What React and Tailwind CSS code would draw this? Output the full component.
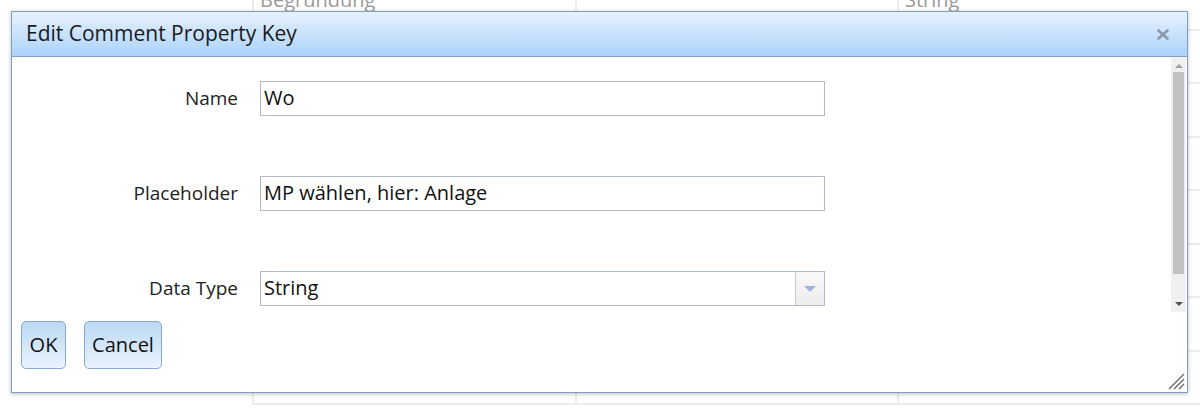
import React from "react";

const rows = ["Begründung", "", "", "", "", "", "", ""];

function Backdrop() {
  return (
    <div className="absolute inset-0 overflow-hidden bg-white">
      <div className="-mt-[23px] ml-[252px]">
        {rows.map((r, i) => (
          <div key={i} className="flex h-[53.5px] border-b-2 border-[#ececec]">
            <div className="w-[323px] border-l-2 border-[#ececec] px-[6px] pt-[8px] text-[20px] text-[#9a9a9a]">{r}</div>
            <div className="w-[322px] border-l-2 border-[#ececec]"></div>
            <div className="flex-1 border-l-2 border-[#ececec] px-[6px] pt-[8px] text-[20px] text-[#9a9a9a]">{i === 0 ? "String" : ""}</div>
          </div>
        ))}
      </div>
    </div>
  );
}

function Field({ label, value, select }) {
  return (
    <div className="flex items-center h-[35px]">
      <div className="w-[226px] text-right text-[19px] text-[#222]">{label}</div>
      <div className="ml-[22px] flex h-[35px] w-[565px] border border-[#b3b9c9] bg-white">
        <div className="flex-1 px-[3px] text-[20px] leading-[32px] text-[#111]">{value}</div>
        {select && (
          <div className="flex w-[29px] items-center justify-center border-l border-[#c4c8d2] bg-gradient-to-b from-[#fafafa] to-[#ececec]">
            <div className="h-0 w-0 border-x-[6px] border-t-[6px] border-x-transparent border-t-[#9fb4d8]"></div>
          </div>
        )}
      </div>
    </div>
  );
}

export default function App() {
  return (
    <div
      className="relative h-[408px] w-[1200px] overflow-hidden bg-white text-[18px]"
      style={{ fontFamily: '"Open Sans", "Noto Sans", sans-serif' }}
    >
      <Backdrop />
      <div className="absolute left-[11px] top-[11px] flex h-[382px] w-[1177px] flex-col border border-[#7f9ec1] bg-white shadow-[0_1px_4px_rgba(0,0,0,0.25)]">
        <div className="flex h-[45px] items-center justify-between border-b border-[#7f9ec1] bg-gradient-to-b from-[#e6f1fd] to-[#acd3fa] pl-[14px] pr-[18px]">
          <span className="text-[21px] text-[#1a1a1a]">Edit Comment Property Key</span>
          <svg width="12" height="11" viewBox="0 0 12 11">
            <path d="M1.5 1.5 L10.5 9.5 M10.5 1.5 L1.5 9.5" stroke="#8a97a8" strokeWidth="2.6" strokeLinecap="round" />
          </svg>
        </div>
        <div className="flex h-[255px]">
          <div className="flex flex-1 flex-col gap-[60px] pt-[24px]">
            <Field label="Name" value="Wo" />
            <Field label="Placeholder" value="MP wählen, hier: Anlage" />
            <Field label="Data Type" value="String" select />
          </div>
          <div className="flex w-[15px] flex-col items-center bg-[#f0f0f0] mr-[1px]">
            <div className="mt-[7px] h-0 w-0 border-x-[4px] border-b-[4px] border-x-transparent border-b-[#a0a0a0]"></div>
            <div className="mt-[4px] h-[202px] w-[11px] bg-[#c1c1c1]"></div>
            <div className="mt-[28px] h-0 w-0 border-x-[4px] border-t-[4px] border-x-transparent border-t-[#505050]"></div>
          </div>
        </div>
        <div className="flex gap-[18px] pl-[9px] pt-[9px]">
          <button className="h-[48px] w-[45px] rounded-[5px] border border-[#86a9cf] bg-gradient-to-b from-[#bcd8f3] to-[#e9f3fd] text-[20px] text-[#111]">OK</button>
          <button className="h-[48px] w-[78px] rounded-[5px] border border-[#86a9cf] bg-gradient-to-b from-[#bcd8f3] to-[#e9f3fd] text-[20px] text-[#111]">Cancel</button>
        </div>
        <svg className="absolute bottom-[2px] right-[2px]" width="18" height="18" viewBox="0 0 18 18">
          <path d="M17 2 L2 17 M17 7 L7 17 M17 12 L12 17" stroke="#6f6f6f" strokeWidth="1.5" />
        </svg>
      </div>
    </div>
  );
}
